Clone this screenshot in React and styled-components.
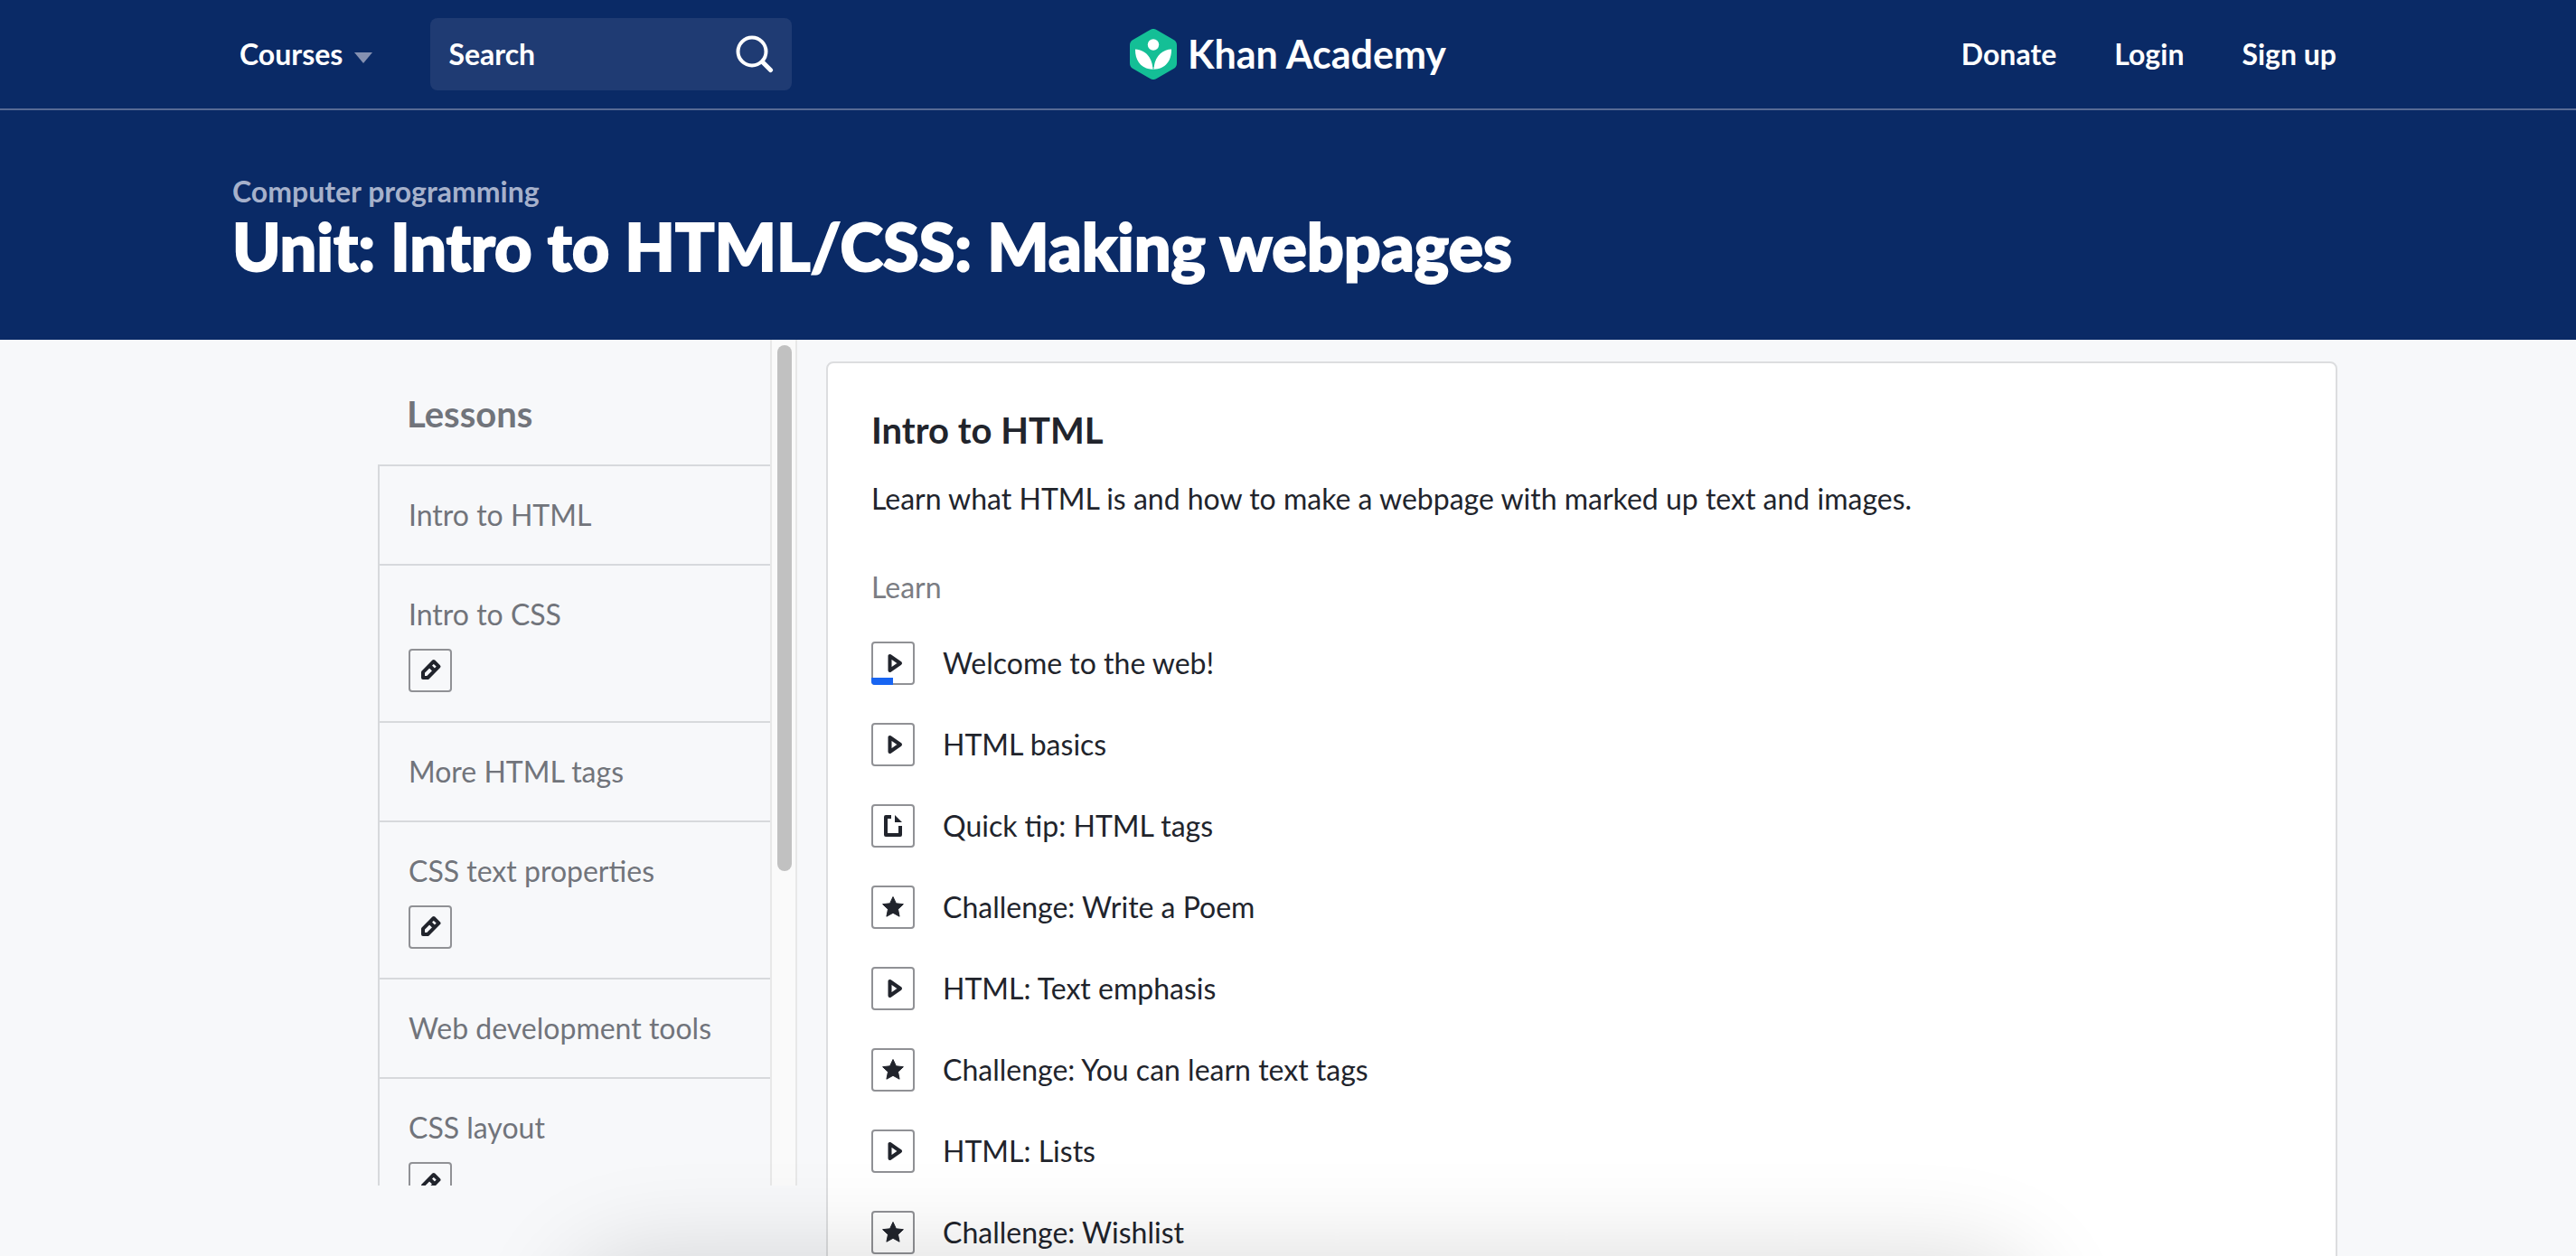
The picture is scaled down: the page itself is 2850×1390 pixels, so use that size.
import React from "react";
import styled, { createGlobalStyle } from "styled-components";

const GlobalStyle = createGlobalStyle`
  * { box-sizing: border-box; }
  body {
    margin: 0;
    background: #f7f8fa;
    color: #21242c;
    font-family: Lato, "Open Sans", sans-serif;
    font-size: 32px;
    line-height: 44px;
    overflow: hidden;
  }
  h1, h2, h3, p, ul { margin: 0; padding: 0; }
  ul { list-style: none; }
  a { color: inherit; text-decoration: none; }
`;

const Page = styled.div`
  height: 100vh;
  display: flex;
  flex-direction: column;
  overflow: hidden;
`;

const TopBar = styled.header`
  flex: none;
  display: grid;
  grid-template-columns: 1fr auto 1fr;
  align-items: center;
  padding: 20px 265px;
  background: #0a2a66;
  border-bottom: 2px solid #576a94;
  color: #fff;
  font-weight: 700;
`;

const NavGroup = styled.nav`
  display: flex;
  align-items: center;
  justify-content: ${(p) => (p.$end ? "flex-end" : "flex-start")};
  gap: 64px;
`;

const CoursesButton = styled.button`
  display: flex;
  align-items: center;
  gap: 13px;
  padding: 0;
  border: 0;
  background: none;
  color: inherit;
  font: inherit;
`;

const Caret = styled.span`
  margin-top: 8px;
  border: 10px solid transparent;
  border-top: 12px solid #8591b1;
  border-bottom: 0;
`;

const SearchBox = styled.form`
  display: flex;
  align-items: center;
  width: 400px;
  height: 80px;
  padding: 0 20px;
  border-radius: 8px;
  background: #1f3b73;
`;

const SearchInput = styled.input`
  flex: 1;
  min-width: 0;
  padding: 0;
  border: 0;
  outline: 0;
  background: none;
  color: #fff;
  font: inherit;
  &::placeholder { color: #fff; opacity: 1; }
`;

const SearchButton = styled.button`
  display: flex;
  padding: 0;
  border: 0;
  background: none;
  color: #fff;
`;

const Brand = styled.a`
  display: flex;
  align-items: center;
  gap: 12px;
  font-size: 43px;
`;

const Hero = styled.section`
  flex: none;
  padding: 68px 257px 66px;
  background: #0a2a66;
  color: #fff;
`;

const Subject = styled.a`
  display: block;
  color: #a6b1cb;
  font-weight: 700;
`;

const UnitTitle = styled.h1`
  font-family: "Lato Black", Lato, "Open Sans", sans-serif;
  font-size: 72px;
  font-weight: 900;
  line-height: 76px;
  -webkit-text-stroke: 2px #fff;
`;

const Body = styled.main`
  flex: 1;
  min-height: 0;
  display: flex;
  align-items: flex-start;
  gap: 32px;
  padding: 0 264px 0 418px;
`;

const Sidebar = styled.aside`
  flex: none;
  display: flex;
  width: 464px;
  height: calc(100% - 78px);
`;

const LessonPane = styled.div`
  flex: 1;
  min-width: 0;
  overflow: hidden;
`;

const LessonsHeading = styled.h2`
  padding: 60px 32px 34px;
  color: #71747b;
  font-size: 40px;
  line-height: 44px;
`;

const LessonList = styled.ul`
  border-left: 2px solid #d7d9dc;
`;

const LessonLink = styled.a`
  display: flex;
  flex-direction: column;
  align-items: flex-start;
  gap: 16px;
  padding: 32px;
  border-top: 2px solid #d7d9dc;
  color: #71747b;
`;

const ScrollTrack = styled.div`
  flex: none;
  width: 30px;
  padding: 6px;
  border: solid #e8e8e8;
  border-width: 0 2px;
  background: #fafafa;
`;

const ScrollThumb = styled.div`
  width: 16px;
  height: 63%;
  border-radius: 8px;
  background: #c1c1c1;
`;

const Card = styled.section`
  flex: 1;
  margin-top: 24px;
  padding: 52px 48px;
  border: 2px solid #dcdddf;
  border-radius: 8px;
  background: #fff;
`;

const CardTitle = styled.h2`
  font-size: 40px;
  line-height: 44px;
`;

const Description = styled.p`
  margin-top: 32px;
`;

const SectionLabel = styled.h3`
  margin-top: 54px;
  color: #7b7d83;
  font-size: 32px;
  font-weight: 400;
`;

const ContentList = styled.ul`
  display: flex;
  flex-direction: column;
  gap: 42px;
  margin-top: 38px;
`;

const ContentLink = styled.a`
  display: flex;
  align-items: center;
  gap: 31px;
  height: 48px;
`;

const IconTile = styled.span`
  position: relative;
  flex: none;
  display: flex;
  align-items: center;
  justify-content: center;
  width: 48px;
  height: 48px;
  border: 2px solid #909195;
  border-radius: 4px;
  color: #21242c;
`;

const Progress = styled.span`
  position: absolute;
  left: -2px;
  bottom: -2px;
  width: 24px;
  height: 8px;
  border-bottom-left-radius: 4px;
  background: #1865f2;
`;

const BottomShade = styled.div`
  position: fixed;
  left: 22%;
  right: 21%;
  top: 100%;
  height: 200px;
  border-radius: 80px;
  box-shadow: 0 0 110px rgba(0, 0, 0, 0.15);
  pointer-events: none;
`;

const glyphs = {
  video: (
    <path d="M18.500 14v16L30 22z" fill="none" stroke="currentColor" strokeWidth="4" strokeLinejoin="round" />
  ),
  article: (
    <g fill="currentColor">
      <path d="M20 10h-6a2 2 0 0 0-2 2v20a2 2 0 0 0 2 2h16a2 2 0 0 0 2-2V22h-4v8H16V14h4z" />
      <path d="M24 10v8h8z" />
    </g>
  ),
  star: (
    <path
      d="M22 10.500l3.400 7.300 8 .9-5.900 5.500 1.600 8L22 28.300l-7.100 3.900 1.600-8-5.900-5.500 8-.9z"
      fill="currentColor"
      stroke="currentColor"
      strokeWidth="1"
      strokeLinejoin="round"
    />
  ),
  pencil: (
    <g fill="none" stroke="currentColor" strokeWidth="4" strokeLinejoin="round">
      <path d="M14 30v-6.200L25.800 12l5.700 5.700L19.200 30z" />
      <path d="M21 16.500l6 6" />
    </g>
  ),
};

function Tile({ kind, progress }) {
  return (
    <IconTile>
      <svg width="44" height="44" viewBox="0 0 44 44" aria-hidden="true">
        {glyphs[kind]}
      </svg>
      {progress && <Progress />}
    </IconTile>
  );
}

function LogoMark() {
  return (
    <svg width="52" height="56" viewBox="0 0 52 56" aria-hidden="true">
      <path
        d="M22.500 1a7 7 0 0 1 7 0l19 11a7 7 0 0 1 3.500 6v20a7 7 0 0 1-3.500 6l-19 11a7 7 0 0 1-7 0l-19-11A7 7 0 0 1 0 38V18a7 7 0 0 1 3.500-6z"
        fill="#14bf96"
      />
      <circle cx="26" cy="17.500" r="6.200" fill="#fff" />
      <path
        d="M6 22.500c8.500.3 17.500 6 19.300 19.500h1.400C28.500 28.500 37.500 22.800 46 22.500c.3 12-6 22.300-20 22.300S5.700 34.500 6 22.500z"
        fill="#fff"
      />
      <path d="M26 33.500v11" stroke="#14bf96" strokeWidth="1.200" />
    </svg>
  );
}

const lessons = [
  { title: "Intro to HTML" },
  { title: "Intro to CSS", project: true },
  { title: "More HTML tags" },
  { title: "CSS text properties", project: true },
  { title: "Web development tools" },
  { title: "CSS layout", project: true },
];

const contents = [
  { kind: "video", title: "Welcome to the web!", progress: true },
  { kind: "video", title: "HTML basics" },
  { kind: "article", title: "Quick tip: HTML tags" },
  { kind: "star", title: "Challenge: Write a Poem" },
  { kind: "video", title: "HTML: Text emphasis" },
  { kind: "star", title: "Challenge: You can learn text tags" },
  { kind: "video", title: "HTML: Lists" },
  { kind: "star", title: "Challenge: Wishlist" },
];

export default function App() {
  return (
    <Page>
      <GlobalStyle />
      <TopBar>
        <NavGroup>
          <CoursesButton type="button">
            Courses
            <Caret />
          </CoursesButton>
          <SearchBox role="search">
            <SearchInput type="text" placeholder="Search" aria-label="Search" />
            <SearchButton type="button" aria-label="Submit search">
              <svg width="42" height="42" viewBox="0 0 42 42" fill="none" stroke="currentColor" aria-hidden="true">
                <circle cx="18" cy="18" r="15.500" strokeWidth="4" />
                <path d="M30 30l8.500 8.500" strokeWidth="5" strokeLinecap="round" />
              </svg>
            </SearchButton>
          </SearchBox>
        </NavGroup>
        <Brand href="#">
          <LogoMark />
          Khan Academy
        </Brand>
        <NavGroup $end>
          <a href="#">Donate</a>
          <a href="#">Login</a>
          <a href="#">Sign up</a>
        </NavGroup>
      </TopBar>
      <Hero>
        <Subject href="#">Computer programming</Subject>
        <UnitTitle>Unit: Intro to HTML/CSS: Making webpages</UnitTitle>
      </Hero>
      <Body>
        <Sidebar>
          <LessonPane>
            <LessonsHeading>Lessons</LessonsHeading>
            <LessonList>
              {lessons.map((lesson) => (
                <li key={lesson.title}>
                  <LessonLink href="#">
                    {lesson.title}
                    {lesson.project && <Tile kind="pencil" />}
                  </LessonLink>
                </li>
              ))}
            </LessonList>
          </LessonPane>
          <ScrollTrack>
            <ScrollThumb />
          </ScrollTrack>
        </Sidebar>
        <Card>
          <CardTitle>Intro to HTML</CardTitle>
          <Description>Learn what HTML is and how to make a webpage with marked up text and images.</Description>
          <SectionLabel>Learn</SectionLabel>
          <ContentList>
            {contents.map((item) => (
              <li key={item.title}>
                <ContentLink href="#">
                  <Tile kind={item.kind} progress={item.progress} />
                  {item.title}
                </ContentLink>
              </li>
            ))}
          </ContentList>
        </Card>
      </Body>
      <BottomShade />
    </Page>
  );
}
